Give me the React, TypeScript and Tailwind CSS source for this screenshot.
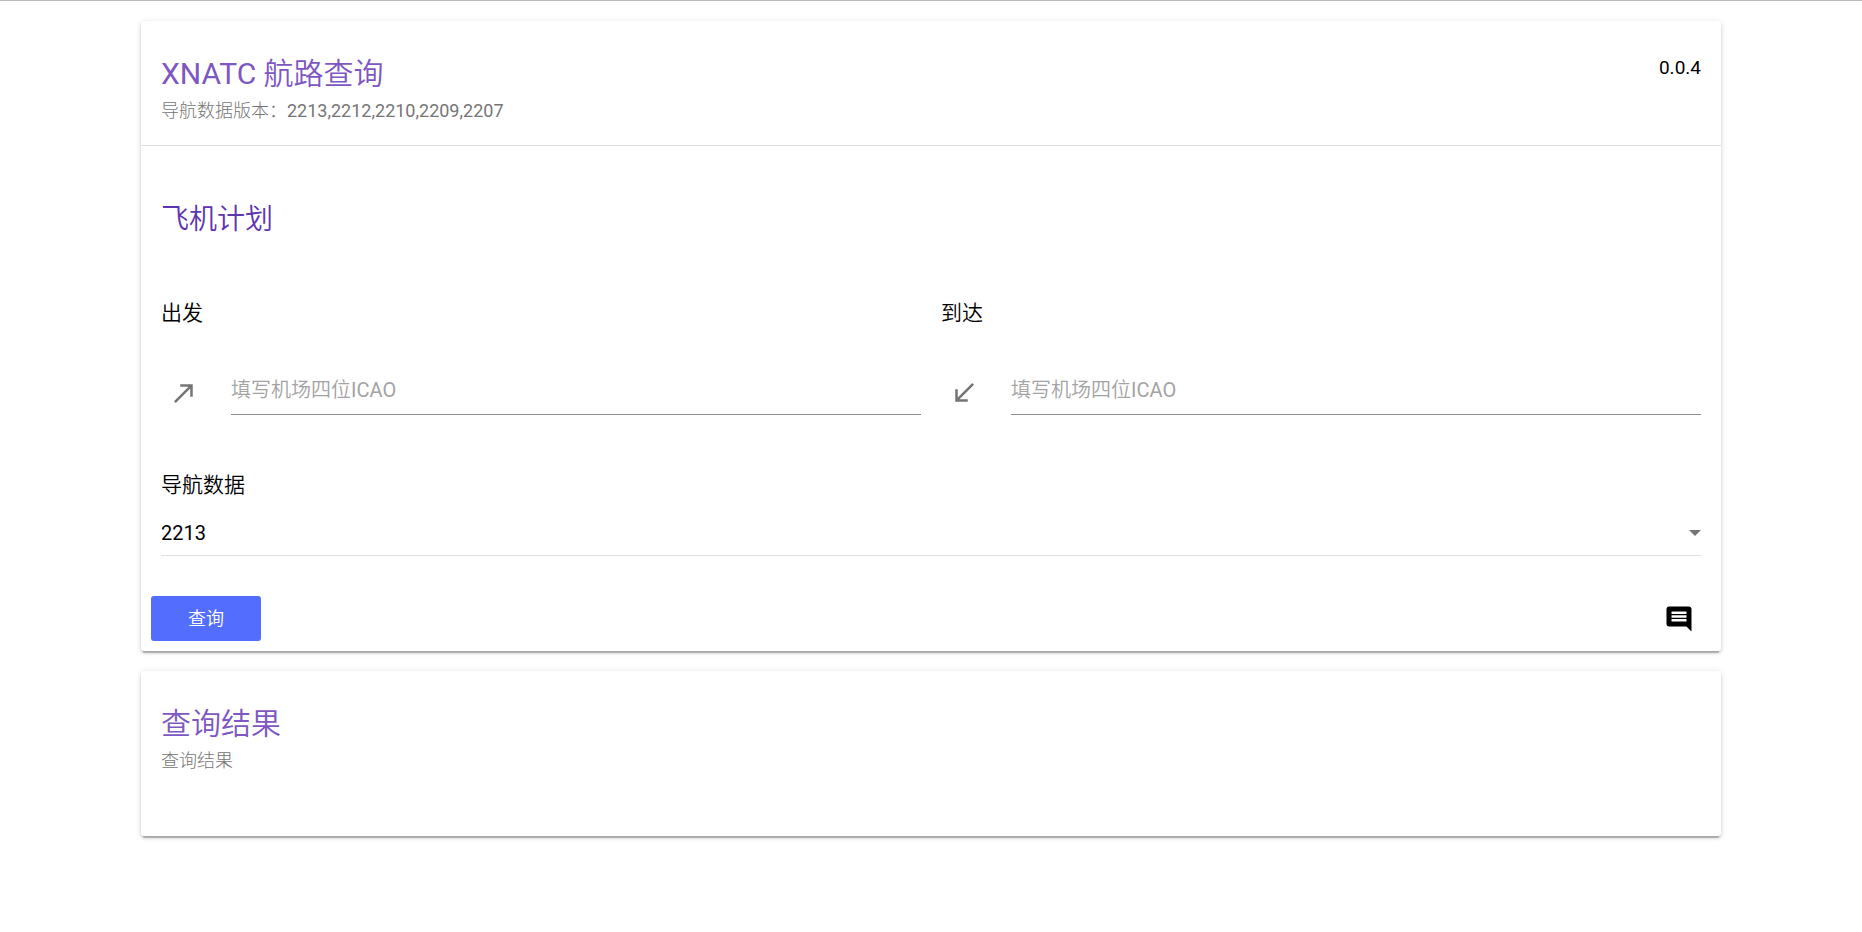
import { useState } from 'react';

const NAV_DATA = ['2213', '2212', '2210', '2209', '2207'];

const CARD =
  'bg-white rounded-[3px] shadow-[0_4px_1px_-2px_rgba(0,0,0,0.2),0_2px_3px_0_rgba(0,0,0,0.14),0_1px_6px_0_rgba(0,0,0,0.12)]';

const SUBTITLE =
  "font-[Roboto,'Noto_Sans_CJK_SC_Light','Noto_Sans_CJK_SC',sans-serif] text-lg leading-[30px] text-[#757575]";

interface AirportFieldProps {
  id: string;
  label: string;
  icon: string;
}

function AirportField({ id, label, icon }: AirportFieldProps) {
  const [value, setValue] = useState('');

  return (
    <div>
      <label htmlFor={id} className="block text-[21px] leading-8">
        {label}
      </label>
      <div className="mt-10 flex items-end pl-2">
        <svg viewBox="0 0 24 24" className="mb-[7px] h-[30px] w-[30px] fill-[#757575]">
          <path d={icon} />
        </svg>
        <input
          id={id}
          type="text"
          maxLength={4}
          placeholder="填写机场四位ICAO"
          value={value}
          onChange={(e) => setValue(e.target.value)}
          className="ml-8 h-[46px] min-w-0 flex-1 border-b border-[#8c8c8c] bg-transparent pb-1 text-xl outline-none placeholder:text-[#a3a3a3]"
        />
      </div>
    </div>
  );
}

export default function App() {
  const [navData, setNavData] = useState(NAV_DATA[0]);

  return (
    <div className="border-t border-[#bbbbbb] font-[Roboto,'Noto_Sans_CJK_SC_DemiLight','Noto_Sans_CJK_SC',sans-serif] text-black">
      <main className="mx-auto flex w-[96%] max-w-[1600px] flex-col gap-5 px-2.5 py-5">
        <section className={CARD}>
          <header className="flex justify-between border-b border-[#dedede] px-5 pt-[30px] pb-[19px]">
            <div>
              <h1 className="text-3xl leading-[45px] text-[#7e57c2]">XNATC 航路查询</h1>
              <p className={SUBTITLE}>导航数据版本：{NAV_DATA.join()}</p>
            </div>
            <span className="text-[19px] leading-[34px]">0.0.4</span>
          </header>

          <div className="px-5 pt-[54px]">
            <h2 className="text-[28px] leading-10 text-[#5e35b1]">飞机计划</h2>
            <div className="mt-[57px] grid grid-cols-2 gap-5">
              <AirportField
                id="departure"
                label="出发"
                icon="M9 5v2h6.59L4 18.59 5.41 20 17 8.41V15h2V5z"
              />
              <AirportField
                id="arrival"
                label="到达"
                icon="M20 5.41L18.59 4 7 15.59V9H5v10h10v-2H8.41z"
              />
            </div>

            <label htmlFor="nav-data" className="mt-[54px] block text-[21px] leading-8">
              导航数据
            </label>
            <div className="relative mt-[10px]">
              <select
                id="nav-data"
                value={navData}
                onChange={(e) => setNavData(e.target.value)}
                className="h-[45px] w-full appearance-none border-b border-[#dedede] bg-transparent text-xl outline-none"
              >
                {NAV_DATA.map((item) => (
                  <option key={item}>{item}</option>
                ))}
              </select>
              <svg
                viewBox="0 0 12 6"
                className="pointer-events-none absolute top-[19px] right-0 h-1.5 w-3 fill-[#757575]"
              >
                <path d="M0 0h12L6 6z" />
              </svg>
            </div>
          </div>

          <div className="mt-10 flex items-center justify-between pr-5 pb-2.5 pl-2.5">
            <button type="button" className="h-[45px] w-[110px] rounded-[3px] bg-[#536dfe] text-lg text-white">
              查询
            </button>
            <button type="button" aria-label="反馈" className="flex h-[45px] w-[45px] items-center justify-center">
              <svg viewBox="0 0 24 24" className="h-[30px] w-[30px] fill-black">
                <path d="M21.99 4c0-1.1-.89-2-1.99-2H4c-1.1 0-2 .9-2 2v12c0 1.1.9 2 2 2h14l4 4-.01-18zM18 14H6v-2h12v2zm0-3H6V9h12v2zm0-3H6V6h12v2z" />
              </svg>
            </button>
          </div>
        </section>

        <section className={CARD}>
          <div className="px-5 pt-[30px] pb-[60px]">
            <h2 className="text-3xl leading-[45px] text-[#7e57c2]">查询结果</h2>
            <p className={SUBTITLE}>查询结果</p>
          </div>
        </section>
      </main>
    </div>
  );
}
